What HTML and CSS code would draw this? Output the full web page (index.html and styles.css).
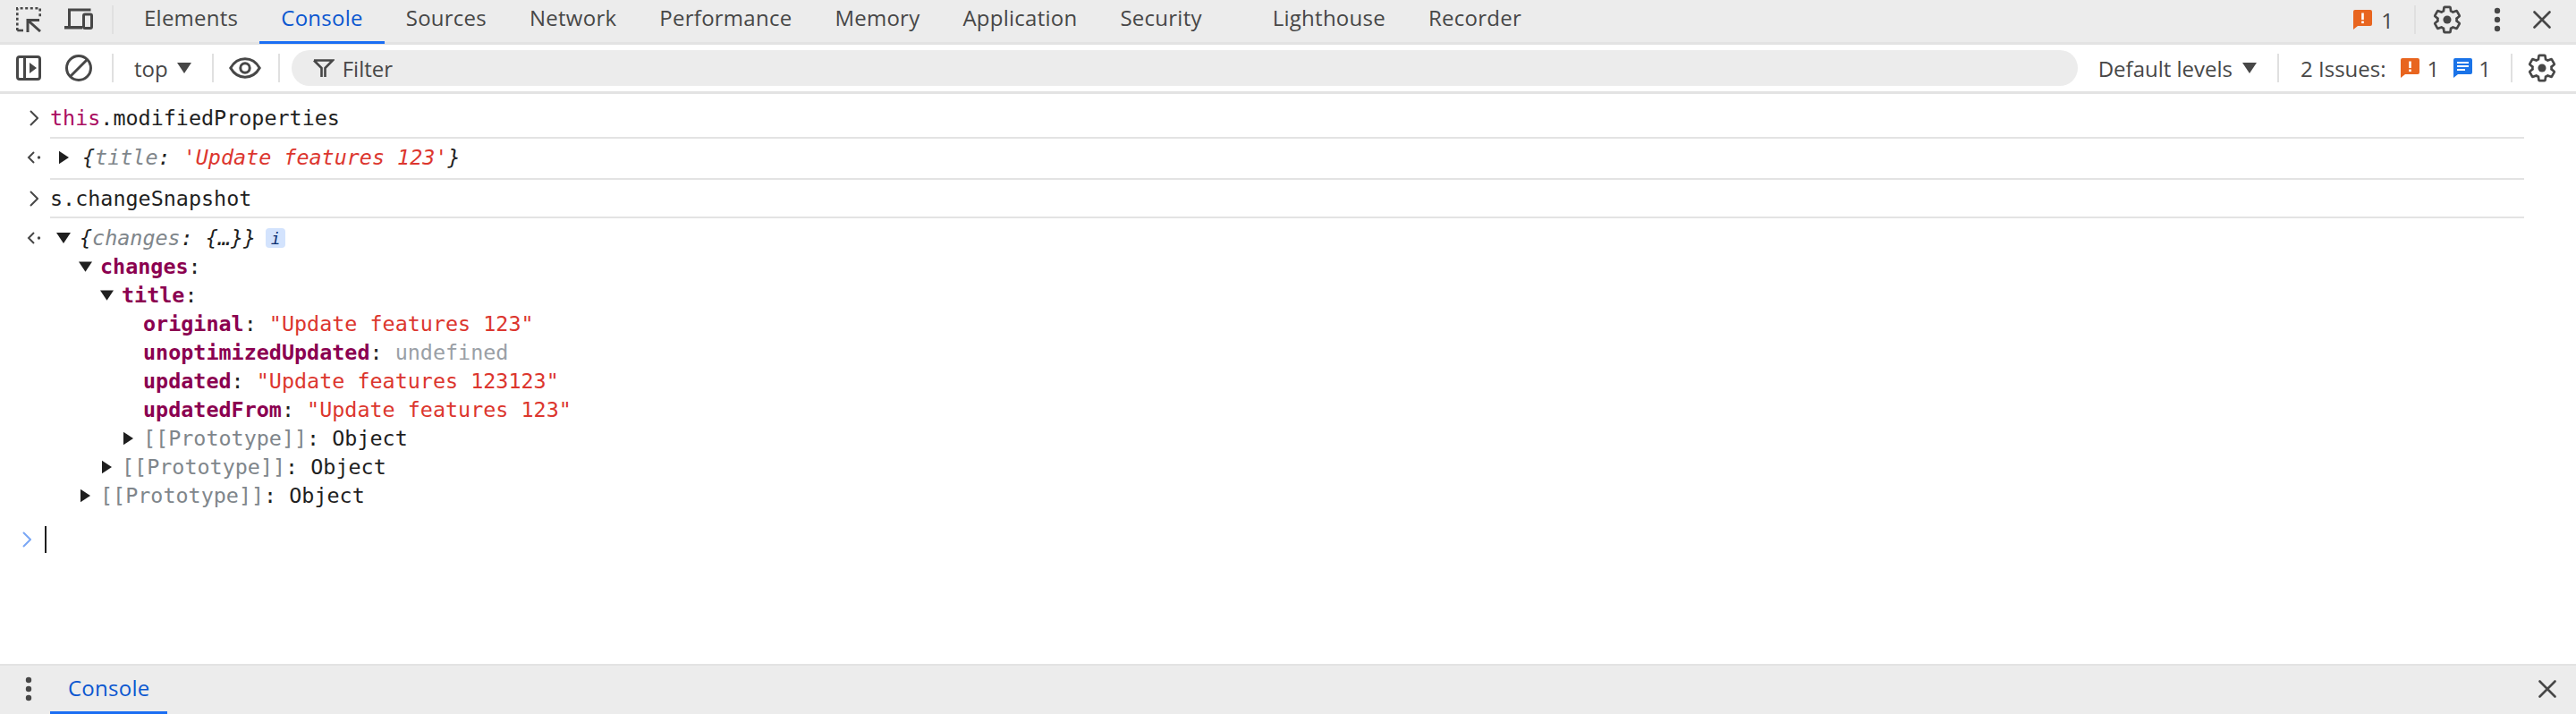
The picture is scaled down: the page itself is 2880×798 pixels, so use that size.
FILE: index.html
```html
<!DOCTYPE html>
<html lang="en">
<head>
<meta charset="utf-8">
<title>DevTools Console</title>
<link rel="stylesheet" href="styles.css">
</head>
<body>
<svg class="defs" width="0" height="0" aria-hidden="true">
  <symbol id="gear" viewBox="0 0 24 24"><path fill="none" stroke="currentColor" stroke-width="1.9" d="M19.43 12.98c.04-.32.07-.64.07-.98s-.03-.66-.07-.98l2.11-1.65c.19-.15.24-.42.12-.64l-2-3.46c-.12-.22-.39-.3-.61-.22l-2.49 1c-.52-.4-1.08-.73-1.69-.98l-.38-2.65C14.46 2.18 14.25 2 14 2h-4c-.25 0-.46.18-.49.42l-.38 2.65c-.61.25-1.17.59-1.69.98l-2.49-1c-.23-.09-.49 0-.61.22l-2 3.46c-.13.22-.07.49.12.64l2.11 1.65c-.04.32-.07.65-.07.98s.03.66.07.98l-2.11 1.65c-.19.15-.24.42-.12.64l2 3.46c.12.22.39.3.61.22l2.49-1c.52.4 1.08.73 1.69.98l.38 2.65c.03.24.24.42.49.42h4c.25 0 .46-.18.49-.42l.38-2.65c.61-.25 1.17-.59 1.69-.98l2.49 1c.23.09.49 0 .61-.22l2-3.46c.12-.22.07-.49-.12-.64l-2.11-1.65z"/><circle cx="12" cy="12" r="3.2" fill="currentColor"/></symbol>
  <symbol id="warn" viewBox="0 0 21 22"><path fill="#e8651f" d="M2 0h17a2 2 0 0 1 2 2v14a2 2 0 0 1-2 2H5l-5 4V2a2 2 0 0 1 2-2z"/><rect x="9.2" y="3.5" width="2.6" height="7.5" fill="#fff"/><rect x="9.2" y="12.5" width="2.6" height="2.6" fill="#fff"/></symbol>
  <symbol id="info" viewBox="0 0 21 22"><path fill="#1a73e8" d="M2 0h17a2 2 0 0 1 2 2v14a2 2 0 0 1-2 2H5l-5 4V2a2 2 0 0 1 2-2z"/><path fill="#fff" d="M4 4h13v2H4zM4 8h13v2H4zM4 12h9v2H4z"/></symbol>
  <symbol id="open" viewBox="0 0 16 12"><path fill="currentColor" d="M0 0h16L8 12z"/></symbol>
  <symbol id="closed" viewBox="0 0 12 16"><path fill="currentColor" d="M0 0l12 8-12 8z"/></symbol>
  <symbol id="close" viewBox="0 0 20 20"><path fill="none" stroke="currentColor" stroke-width="2.6" stroke-linecap="round" d="M1.5 1.5l17 17M18.5 1.5l-17 17"/></symbol>
  <symbol id="dots" viewBox="0 0 8 28"><circle cx="4" cy="4" r="3.2" fill="currentColor"/><circle cx="4" cy="14" r="3.2" fill="currentColor"/><circle cx="4" cy="24" r="3.2" fill="currentColor"/></symbol>
</svg>

<header class="tabbar">
  <svg class="ic-inspect" viewBox="0 0 28 28"><path fill="none" stroke="currentColor" stroke-width="2.6" stroke-dasharray="3 2.6" d="M1.3 26V1.3H26.7V12"/><path fill="none" stroke="currentColor" stroke-width="2.6" d="M1.3 26H8"/><path fill="none" stroke="currentColor" stroke-width="3" d="M13 28V14.5H26M13.5 15L27 27"/></svg>
  <svg class="ic-device" viewBox="0 0 32 24"><path fill="none" stroke="currentColor" stroke-width="3" d="M5.5 21V2h24"/><path fill="currentColor" d="M0 20h20v3.5H0z"/><rect x="21.5" y="7" width="9" height="15.5" rx="1.5" fill="none" stroke="currentColor" stroke-width="3"/></svg>
  <span class="sep sep-top"></span>
  <nav class="tabs">
    <span class="tab">Elements</span>
    <span class="tab active">Console</span>
    <span class="tab">Sources</span>
    <span class="tab">Network</span>
    <span class="tab">Performance</span>
    <span class="tab">Memory</span>
    <span class="tab">Application</span>
    <span class="tab">Security</span>
    <span class="tab tab-far">Lighthouse</span>
    <span class="tab">Recorder</span>
  </nav>
  <div class="tabbar-right">
    <svg class="badge"><use href="#warn"/></svg>
    <span class="count">1</span>
    <span class="sep sep-top sep-r"></span>
    <svg class="gear"><use href="#gear"/></svg>
    <svg class="dots"><use href="#dots"/></svg>
    <svg class="close"><use href="#close"/></svg>
  </div>
</header>

<section class="toolbar">
  <svg class="ic-sidebar" viewBox="0 0 28 28"><rect x="1.5" y="1.5" width="25" height="25" rx="2.5" fill="none" stroke="currentColor" stroke-width="3"/><path fill="currentColor" d="M8 2h3v24H8zM15 8l8 6-8 6z"/></svg>
  <svg class="ic-stop" viewBox="0 0 30 30"><circle cx="15" cy="15" r="13.5" fill="none" stroke="currentColor" stroke-width="3"/><path stroke="currentColor" stroke-width="3" d="M5.5 24.5l19-19"/></svg>
  <span class="sep sep-a"></span>
  <span class="ctx">top</span>
  <svg class="caret caret-ctx"><use href="#open"/></svg>
  <span class="sep sep-b"></span>
  <svg class="ic-eye" viewBox="0 0 36 24"><path fill="none" stroke="currentColor" stroke-width="3" d="M1.8 12C5.5 5.5 11 1.8 18 1.8S30.500 5.500 34.200 12C30.500 18.500 25 22.200 18 22.200S5.500 18.500 1.800 12z"/><circle cx="18" cy="12" r="5.2" fill="none" stroke="currentColor" stroke-width="3"/></svg>
  <span class="sep sep-c"></span>
  <div class="filter">
    <svg class="ic-funnel" viewBox="0 0 25 20"><path fill="none" stroke="currentColor" stroke-width="2.6" d="M2 1.500h21L14.500 10v10M10.500 20V10L2 1.500"/></svg>
    <span>Filter</span>
  </div>
  <span class="levels">Default levels</span>
  <svg class="caret caret-levels"><use href="#open"/></svg>
  <span class="sep sep-d"></span>
  <span class="issues">2 Issues:</span>
  <svg class="badge badge-a"><use href="#warn"/></svg>
  <span class="count count-a">1</span>
  <svg class="badge badge-b"><use href="#info"/></svg>
  <span class="count count-b">1</span>
  <span class="sep sep-e"></span>
  <svg class="gear gear-b"><use href="#gear"/></svg>
</section>

<main class="console">
  <div class="msg msg-1">
    <div class="gutter"><svg class="chev" viewBox="0 0 10 18"><path fill="none" stroke="currentColor" stroke-width="2" d="M1 1l8 8-8 8"/></svg></div>
    <div class="body ruled"><span class="kw">this</span>.modifiedProperties</div>
  </div>
  <div class="msg msg-2">
    <div class="gutter"><svg class="back" viewBox="0 0 16 16"><path fill="none" stroke="currentColor" stroke-width="2" d="M8 2L2 8l6 6"/><circle cx="13.500" cy="8" r="1.700" fill="currentColor"/></svg></div>
    <div class="body ruled">
      <div class="tree-row">
        <svg class="twist-root"><use href="#closed"/></svg>
        <span class="it">{<span class="dim">title</span>: <span class="str">'Update features 123'</span>}</span>
      </div>
    </div>
  </div>
  <div class="msg msg-3">
    <div class="gutter"><svg class="chev" viewBox="0 0 10 18"><path fill="none" stroke="currentColor" stroke-width="2" d="M1 1l8 8-8 8"/></svg></div>
    <div class="body ruled">s.changeSnapshot</div>
  </div>
  <div class="msg msg-4">
    <div class="gutter"><svg class="back" viewBox="0 0 16 16"><path fill="none" stroke="currentColor" stroke-width="2" d="M8 2L2 8l6 6"/><circle cx="13.500" cy="8" r="1.700" fill="currentColor"/></svg></div>
    <div class="body">
      <div class="tree-row">
        <svg class="twist-root open"><use href="#open"/></svg>
        <span class="it">{<span class="dim">changes</span>: {…}}</span>
        <span class="info-tag">i</span>
      </div>
      <div class="tree-row l1"><svg class="twist open"><use href="#open"/></svg><b class="key">changes</b>:</div>
      <div class="tree-row l2"><svg class="twist open"><use href="#open"/></svg><b class="key">title</b>:</div>
      <div class="tree-row l3 leaf"><b class="key">original</b>:&nbsp;<span class="str">"Update features 123"</span></div>
      <div class="tree-row l3 leaf"><b class="key">unoptimizedUpdated</b>:&nbsp;<span class="undef">undefined</span></div>
      <div class="tree-row l3 leaf"><b class="key">updated</b>:&nbsp;<span class="str">"Update features 123123"</span></div>
      <div class="tree-row l3 leaf"><b class="key">updatedFrom</b>:&nbsp;<span class="str">"Update features 123"</span></div>
      <div class="tree-row l3"><svg class="twist"><use href="#closed"/></svg><span class="proto">[[Prototype]]</span>:&nbsp;Object</div>
      <div class="tree-row l2"><svg class="twist"><use href="#closed"/></svg><span class="proto">[[Prototype]]</span>:&nbsp;Object</div>
      <div class="tree-row l1"><svg class="twist"><use href="#closed"/></svg><span class="proto">[[Prototype]]</span>:&nbsp;Object</div>
    </div>
  </div>
  <div class="prompt">
    <div class="gutter"><svg class="chev chev-blue" viewBox="0 0 10 18"><path fill="none" stroke="currentColor" stroke-width="2" d="M1 1l8 8-8 8"/></svg></div>
    <span class="cursor"></span>
  </div>
</main>

<footer class="drawer">
  <svg class="dots dots-d"><use href="#dots"/></svg>
  <span class="tab active drawer-tab">Console</span>
  <svg class="close close-d"><use href="#close"/></svg>
</footer>
</body>
</html>
```

FILE: styles.css
```css
* { box-sizing: border-box; }
html, body { height: 100%; }
body {
  margin: 0;
  height: 798px;
  overflow: hidden;
  display: flex;
  flex-direction: column;
  background: #fff;
  color: #474747;
  font-family: "Open Sans", "Noto Sans", sans-serif;
  font-size: 24px;
}
.defs { position: absolute; }
svg { display: block; flex: none; }

.tabbar {
  height: 50px;
  flex: none;
  display: flex;
  align-items: center;
  padding-left: 18px;
  background: #ececec;
  border-bottom: 3px solid #e3e3e3;
}
.ic-inspect { width: 28px; height: 28px; margin-top: -3px; }
.ic-device { width: 32px; height: 24px; margin-left: 26px; margin-top: -5px; }
.sep { width: 2px; height: 32px; background: #e0e0e0; flex: none; }
.sep-top { margin-left: 21px; margin-top: -3px; }
.tabs { display: flex; height: 50px; margin-left: 10px; }
.tab {
  display: flex;
  align-items: center;
  height: 50px;
  padding: 0 24px 6px;
  white-space: nowrap;
  letter-spacing: 0.25px;
  border-bottom: 3px solid transparent;
}
.tab.active { color: #0b57d0; border-bottom-color: #1b6ef3; }
.tab-far { margin-left: 31px; }
.tabbar-right { margin-left: auto; display: flex; align-items: center; padding-right: 28px; margin-top: -3px; }
.badge { width: 21px; height: 22px; }
.count { margin-left: 10px; }
.sep-r { margin-left: 23px; margin-top: 0; }
.gear { width: 34px; height: 34px; margin-left: 18px; }
.dots { width: 8px; height: 28px; margin-left: 35px; }
.close { width: 20px; height: 20px; margin-left: 36px; }

.toolbar {
  height: 55px;
  flex: none;
  display: flex;
  align-items: center;
  padding: 0 0 0 18px;
  border-bottom: 3px solid #e3e3e3;
}
.ic-sidebar { width: 28px; height: 28px; }
.ic-stop { width: 30px; height: 30px; margin-left: 27px; }
.sep-a { margin-left: 22px; }
.ctx { margin-left: 23px; }
.caret { width: 16px; height: 12px; }
.caret-ctx { margin-left: 10px; }
.sep-b { margin-left: 23px; }
.ic-eye { width: 36px; height: 24px; margin-left: 17px; }
.sep-c { margin-left: 19px; }
.filter {
  flex: 1;
  display: flex;
  align-items: center;
  height: 40px;
  margin-left: 13px;
  padding-left: 23px;
  border-radius: 20px;
  background: #ececec;
}
.ic-funnel { width: 25px; height: 20px; margin-right: 9px; }
.levels { margin-left: 23px; }
.caret-levels { margin-left: 11px; }
.sep-d { margin-left: 23px; }
.issues { margin-left: 24px; }
.badge-a { margin-left: 16px; }
.count-a { margin-left: 9px; }
.badge-b { margin-left: 16px; }
.count-b { margin-left: 7px; }
.sep-e { margin-left: 22px; }
.gear-b { margin-left: 16px; margin-right: 21px; }

.console {
  flex: 1;
  font-family: "DejaVu Sans Mono", "Liberation Mono", monospace;
  font-size: 23.4px;
  line-height: 32px;
  color: #1f1f1f;
}
.msg { display: flex; padding-right: 58px; }
.gutter { width: 56px; flex: none; height: 32px; display: flex; align-items: center; }
.body { flex: 1; }
.ruled { border-bottom: 2px solid #e3e3e3; }
.msg-1 { padding-top: 11px; }
.msg-1 .ruled { padding-bottom: 5px; }
.msg-2 { padding-top: 5px; }
.msg-2 .ruled { padding-bottom: 7px; }
.msg-3 { padding-top: 5px; }
.msg-3 .ruled { padding-bottom: 4px; }
.msg-4 { padding-top: 6px; }
.chev { width: 10px; height: 18px; margin-left: 33px; color: #474747; }
.chev-blue { margin-left: 25px; color: #7aa7f5; }
.back { width: 16px; height: 16px; margin-left: 30px; color: #474747; }
.tree-row { display: flex; align-items: center; height: 32px; }
.twist-root { width: 11px; height: 16px; margin: 0 15px 0 10px; color: #1f1f1f; }
.twist-root.open { width: 16px; height: 12px; margin: 0 10px 0 7px; }
.twist { width: 11px; height: 16px; margin-left: 2px; margin-right: 11px; color: #1f1f1f; }
.twist.open { width: 15px; height: 12px; margin-left: 0; margin-right: 9px; }
.l1 { padding-left: 32px; }
.l2 { padding-left: 56px; }
.l3 { padding-left: 80px; }
.l3.leaf { padding-left: 104px; }
.it { font-style: italic; }
.dim { color: #80868b; }
.str { color: #dc362e; }
.kw { color: #aa0d61; }
.key { color: #8b0050; font-weight: 700; }
.undef { color: #9aa0a6; }
.proto { color: #80868b; }
.info-tag {
  width: 22px;
  height: 22px;
  margin-left: 11px;
  border-radius: 4px;
  background: #d3e3fd;
  color: #0b2e6f;
  font-size: 18px;
  font-style: italic;
  line-height: 24px;
  text-align: center;
}
.prompt { display: flex; margin-top: 18px; height: 30px; }
.prompt .gutter { height: 30px; width: 50px; }
.cursor { width: 2px; height: 30px; background: #1f1f1f; }

.drawer {
  height: 56px;
  flex: none;
  display: flex;
  align-items: center;
  background: #ececec;
  border-top: 2px solid #e3e3e3;
  padding-left: 28px;
}
.dots-d { margin-left: 0; margin-bottom: 2px; }
.drawer-tab { height: 54px; margin-left: 20px; padding: 0 20px 2px 20px; }
.close-d { margin-left: auto; margin-right: 22px; margin-bottom: 2px; }
```
